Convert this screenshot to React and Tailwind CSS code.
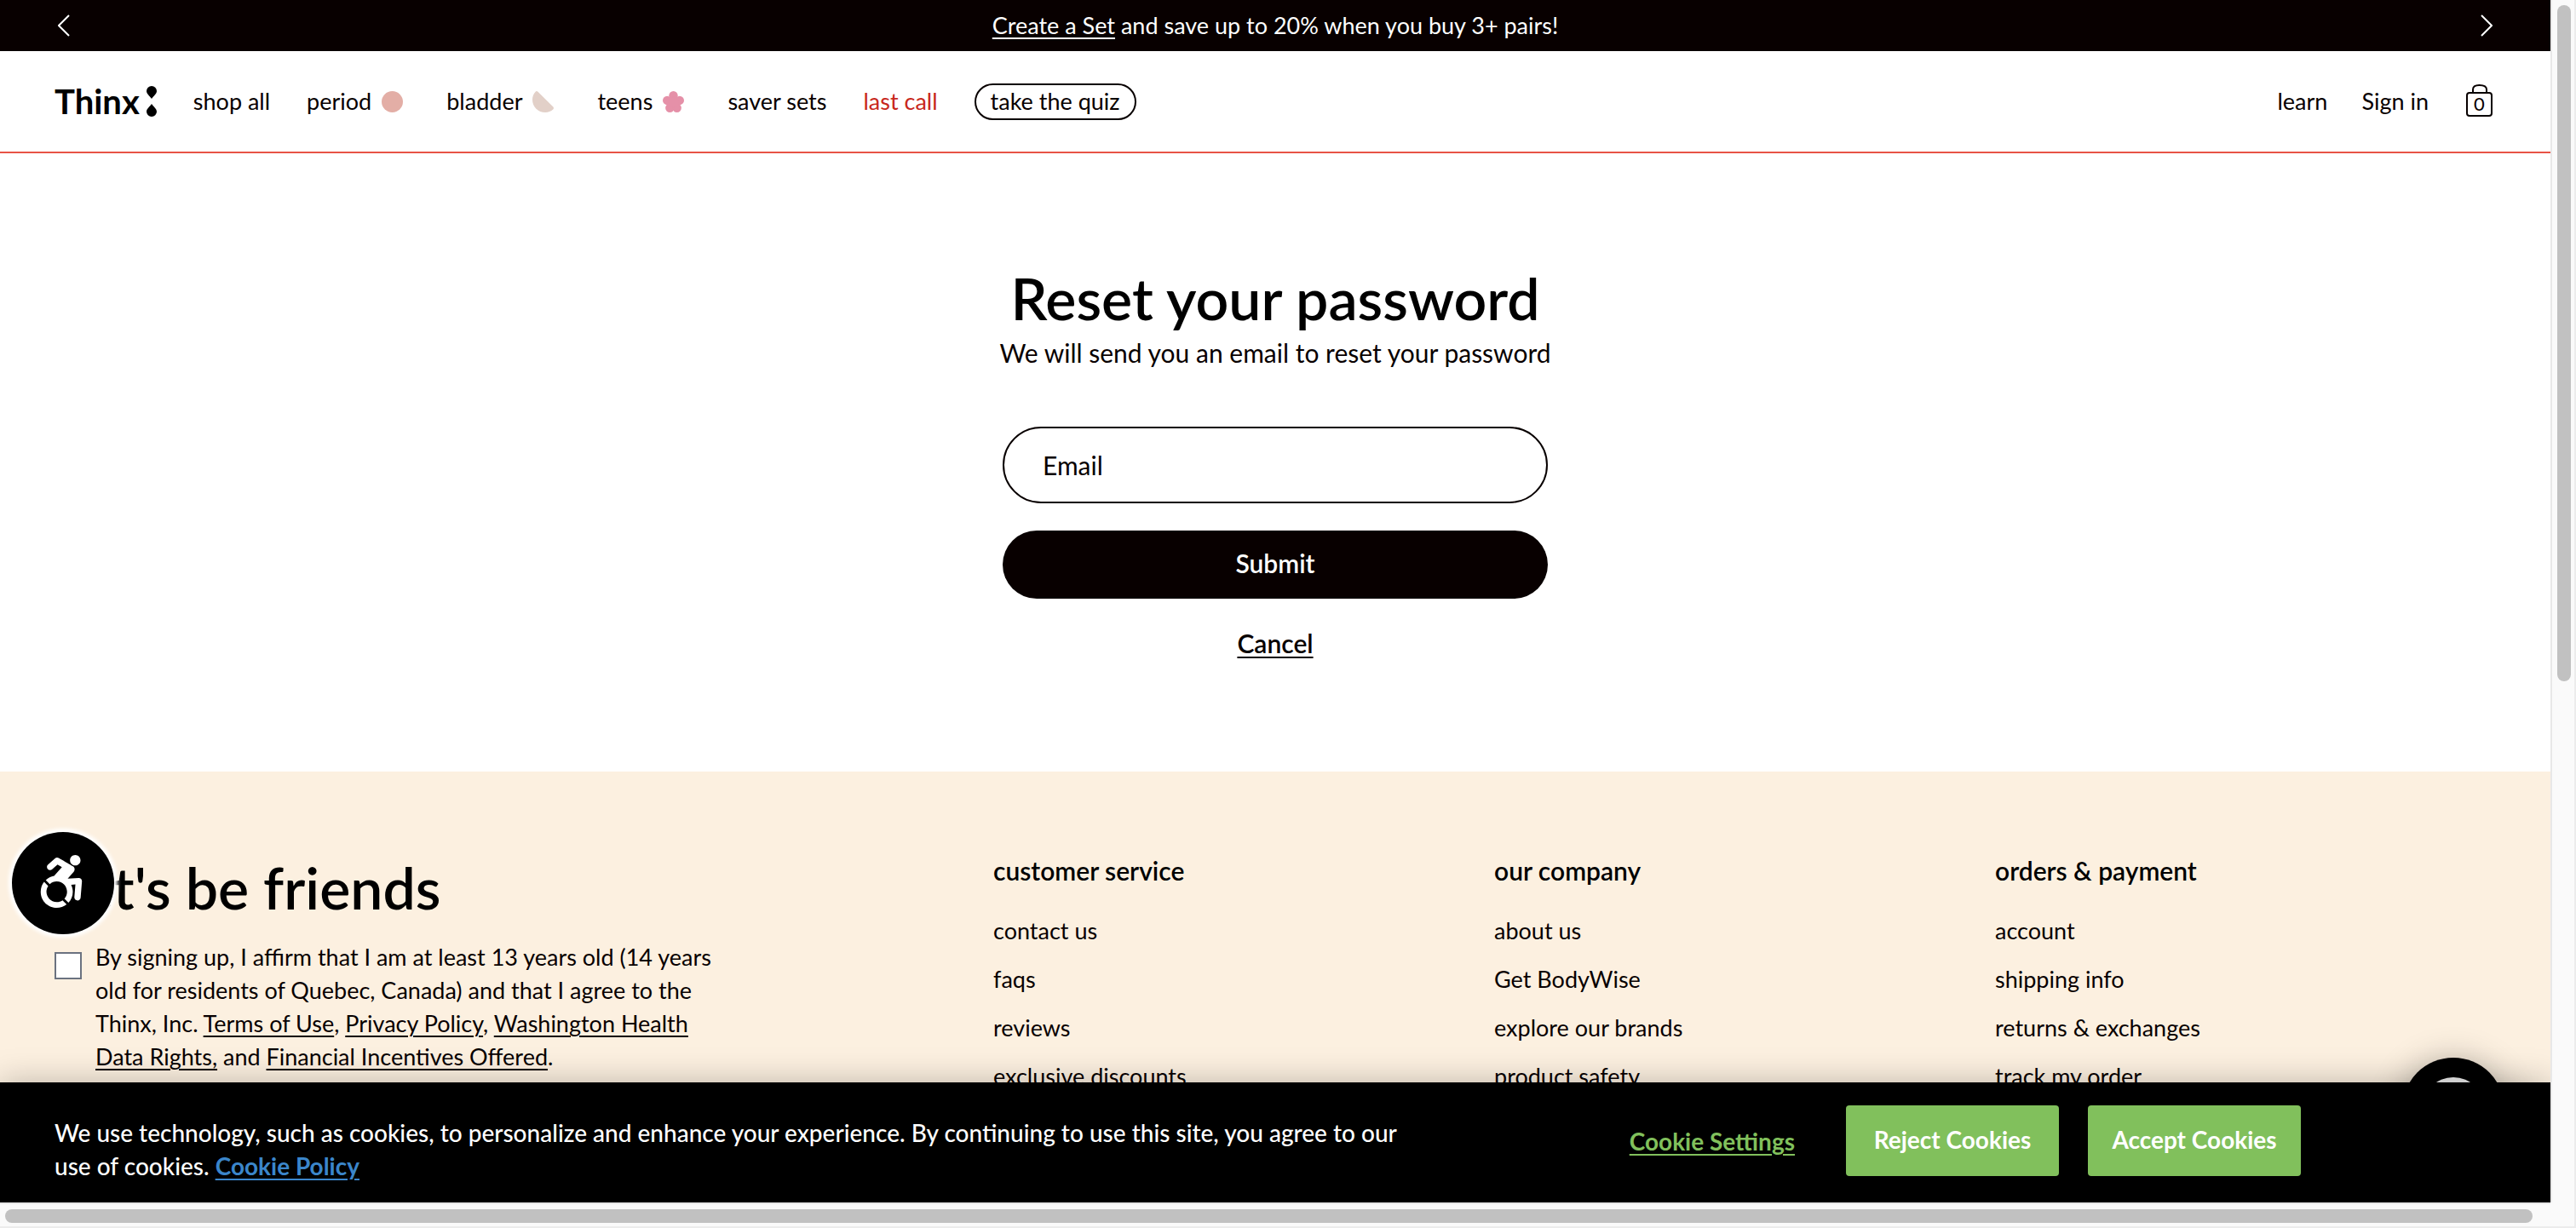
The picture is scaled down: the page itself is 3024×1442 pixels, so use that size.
import React from "react";
import { FaAccessibleIcon } from "react-icons/fa";

const columns = [
  { title: "customer service", links: ["contact us", "faqs", "reviews", "exclusive discounts"] },
  { title: "our company", links: ["about us", "Get BodyWise", "explore our brands", "product safety"] },
  { title: "orders & payment", links: ["account", "shipping info", "returns & exchanges", "track my order"] },
];

function Chevron({ flip }) {
  return (
    <svg viewBox="0 0 14 26" className="h-[26px] w-[14px]" fill="none" stroke="white" strokeWidth="2">
      {flip ? <path d="M1 1 L13 13 L1 25" /> : <path d="M13 1 L1 13 L13 25" />}
    </svg>
  );
}

function AnnouncementBar() {
  return (
    <div className="flex h-[60px] shrink-0 items-center justify-between bg-[#080000] px-[68px] text-[27px] text-white">
      <button type="button" aria-label="Previous announcement"><Chevron /></button>
      <p><a href="#set" className="underline decoration-2 underline-offset-4">Create a Set</a> and save up to 20% when you buy 3+ pairs!</p>
      <button type="button" aria-label="Next announcement"><Chevron flip /></button>
    </div>
  );
}

function Logo() {
  return (
    <a href="#home" className="flex items-center gap-2 text-[40px] font-bold leading-none text-black">
      Thinx
      <svg viewBox="0 0 12 36" className="h-9 w-3" fill="black">
        <path d="M6 0a6 6 0 0 1 6 6c0 3-3.500 5.500-6 9C3.500 11.500 0 9 0 6a6 6 0 0 1 6-6z" />
        <path d="M6 36a6 6 0 0 1-6-6c0-3 3.500-5.500 6-9 2.500 3.500 6 6 6 9a6 6 0 0 1-6 6z" />
      </svg>
    </a>
  );
}

function Header() {
  return (
    <header className="flex h-[120px] shrink-0 items-center justify-between border-b-2 border-[#e85346] bg-white pl-16 pr-[67px] text-[27px]">
      <nav className="flex items-center gap-[43px]">
        <Logo />
        <a href="#shop">shop all</a>
        <a href="#period" className="mr-2 flex items-center gap-3">
          period
          <svg viewBox="0 0 24 24" className="size-[25px]" fill="#e3aea6"><circle cx="12" cy="12" r="12" /></svg>
        </a>
        <a href="#bladder" className="mr-2 flex items-center gap-3">
          bladder
          <svg viewBox="0 0 24 24" className="size-[25px]" fill="#e2d0c8">
            <path d="M3.500.600C4.300-.200 5.400-.100 6.200.800L23.200 17.500c1 1 1 2.200.1 3.200C21 23 18 24 14.500 24 6.500 24 0 17.500 0 9.500 0 6 1.200 3 3.500.600z" />
          </svg>
        </a>
        <a href="#teens" className="mr-2 flex items-center gap-3">
          teens
          <svg viewBox="0 0 24 24" className="size-[25px]" fill="#e590a8">
            <circle cx="12" cy="5" r="5" /><circle cx="5" cy="10.500" r="5" /><circle cx="19" cy="10.500" r="5" />
            <circle cx="8" cy="19" r="5" /><circle cx="16" cy="19" r="5" /><circle cx="12" cy="12.500" r="6" />
          </svg>
        </a>
        <a href="#sets">saver sets</a>
        <a href="#last" className="text-[#c8281c]">last call</a>
        <a href="#quiz" className="flex h-[43px] items-center rounded-full border-2 border-[#080000] px-[17px]">take the quiz</a>
      </nav>
      <div className="flex items-center gap-10">
        <a href="#learn">learn</a>
        <a href="#signin">Sign in</a>
        <a href="#cart" aria-label="Cart" className="ml-1">
          <svg viewBox="0 0 32 40" className="h-10 w-8" fill="none" stroke="#080000" strokeWidth="2">
            <rect x="1" y="10" width="29" height="27" rx="3" />
            <path d="M8 10V6c0-3.500 3-5 7.500-5S24 2.500 24 6v4" />
            <text x="15.500" y="31" textAnchor="middle" fontSize="22" fill="#080000" stroke="none">0</text>
          </svg>
        </a>
      </div>
    </header>
  );
}

function ResetForm() {
  return (
    <main className="flex h-[726px] shrink-0 flex-col items-center bg-white pt-[130px]">
      <h1 className="text-[68px] font-semibold leading-[80px] text-black">Reset your password</h1>
      <p className="mt-1 text-[30px] leading-10">We will send you an email to reset your password</p>
      <form className="mt-[67px] flex w-[640px] flex-col items-center">
        <input type="email" aria-label="Email" placeholder="Email" className="h-[90px] w-full rounded-full border-2 border-[#080000] px-[45px] text-[30px] placeholder:text-[#080000] placeholder:opacity-100" />
        <button type="button" className="mt-8 h-20 w-full rounded-full bg-[#080000] pb-1 text-[30px] font-semibold text-white">Submit</button>
        <a href="#cancel" className="mt-8 text-[30px] font-semibold leading-10 underline decoration-2 underline-offset-4">Cancel</a>
      </form>
    </main>
  );
}

function Footer() {
  const link = "underline decoration-2 underline-offset-4";
  return (
    <footer className="grid grow grid-cols-[1102fr_588fr_588fr_588fr] bg-[#fcf0e0] px-16 pt-24">
      <section>
        <h2 className="text-[68px] font-semibold leading-[80px] text-black">Let's be friends</h2>
        <div className="mt-[22px] flex items-start gap-4">
          <input id="agree" type="checkbox" className="mt-[14px] size-8 shrink-0 appearance-none border-2 border-[#6b7280] bg-white" />
          <label htmlFor="agree" className="text-[27px] leading-[39px]">
            By signing up, I affirm that I am at least 13 years old (14 years<br />
            old for residents of Quebec, Canada) and that I agree to the<br />
            Thinx, Inc. <a href="#terms" className={link}>Terms of Use</a>, <a href="#privacy" className={link}>Privacy Policy</a>, <a href="#health" className={link}>Washington Health<br />
            Data Rights,</a> and <a href="#incentives" className={link}>Financial Incentives Offered</a>.
          </label>
        </div>
      </section>
      {columns.map((c) => (
        <section key={c.title}>
          <h3 className="text-[30px] font-semibold leading-10 text-black">{c.title}</h3>
          <ul className="mt-[22px] text-[27px] leading-[57px]">
            {c.links.map((l) => <li key={l}><a href="#footer">{l}</a></li>)}
          </ul>
        </section>
      ))}
    </footer>
  );
}

function CookieBanner() {
  return (
    <div className="absolute inset-x-0 bottom-0 flex h-[141px] items-center justify-between bg-black pl-16 pr-[293px] text-[28px] text-white shadow-[0_0_36px_rgba(0,0,0,0.25)]">
      <p className="pt-4 font-medium leading-[39px]">
        We use technology, such as cookies, to personalize and enhance your experience. By continuing to use this site, you agree to our<br />
        use of cookies. <a href="#cookies" className="font-bold text-[#3b86cb] underline decoration-2 underline-offset-4">Cookie Policy</a>
      </p>
      <div className="flex items-center pb-1 font-bold">
        <button type="button" className="mr-[60px] text-[#81c05c] underline decoration-2 underline-offset-4">Cookie Settings</button>
        <button type="button" className="mr-[34px] h-[83px] w-[250px] rounded bg-[#81c05c] pb-1">Reject Cookies</button>
        <button type="button" className="h-[83px] w-[250px] rounded bg-[#81c05c] pb-1">Accept Cookies</button>
      </div>
    </div>
  );
}

export default function App() {
  return (
    <div className="grid h-screen grid-cols-[1fr_30px] grid-rows-[1fr_30px] overflow-hidden bg-[#fafafa] font-['Lato',sans-serif] text-[#080000]">
      <div className="relative flex min-h-0 min-w-0 flex-col overflow-hidden">
        <AnnouncementBar />
        <Header />
        <ResetForm />
        <Footer />
        <button type="button" aria-label="Chat" className="absolute right-[54px] bottom-[50px] flex size-[120px] items-center justify-center rounded-full bg-black shadow-[0_4px_40px_rgba(0,0,0,0.3)]">
          <span className="size-[74px] rounded-full bg-[#ebebeb]" />
        </button>
        <CookieBanner />
        <button type="button" aria-label="Accessibility options" className="absolute bottom-[315px] left-[14px] flex size-[120px] items-center justify-center rounded-full bg-black pr-1 pb-1 text-white shadow-[0_0_4px_4px_white]">
          <FaAccessibleIcon className="size-[62px]" />
        </button>
      </div>
      <div className="border-l-2 border-r-2 border-l-[#e8e8e8] border-r-[#ececec] px-[6px] pr-1 pt-[6px]">
        <div className="h-[794px] w-4 rounded-full bg-[#c1c1c1]" />
      </div>
      <div className="border-y-2 border-t-[#e8e8e8] border-b-[#ececec] pt-[6px] pl-[6px] pr-[21px]">
        <div className="h-4 rounded-full bg-[#c1c1c1]" />
      </div>
      <div className="border-b-2 border-r-2 border-[#ececec]" />
    </div>
  );
}
